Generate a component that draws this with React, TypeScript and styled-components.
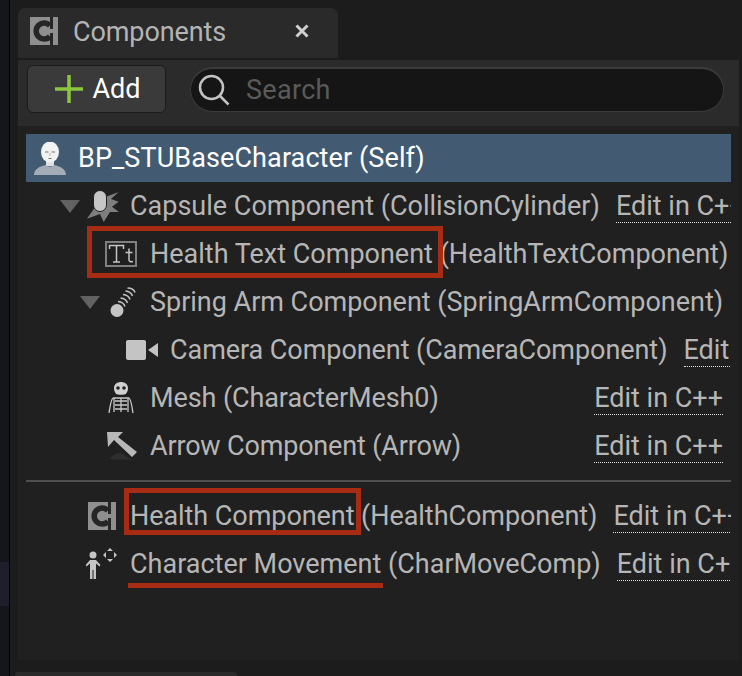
import React from 'react';
import styled, { createGlobalStyle } from 'styled-components';

const GlobalStyle = createGlobalStyle`
  html, body { margin: 0; padding: 0; background: #1c1c1c; }
  body { font-family: Roboto, "Liberation Sans", sans-serif; }
`;

const Page = styled.div`
  display: flex;
  width: 742px;
  height: 676px;
  overflow: hidden;
  background: #1c1c1c;
`;

const SideStrip = styled.div`
  display: flex;
  flex-direction: column;
  width: 10px;
  flex-shrink: 0;
  padding-top: 562px;
  box-sizing: border-box;
  background: #14161c;
  border-right: 1px solid #000;
`;

const StripPatch = styled.div`
  height: 44px;
  background: #1e1f2a;
`;

const Workspace = styled.div`
  display: flex;
  flex-direction: column;
  width: 721px;
  margin-left: 8px;
  padding-top: 8px;

  & > * {
    flex-shrink: 0;
  }
`;

const Tab = styled.div`
  display: flex;
  align-items: center;
  width: 320px;
  height: 50px;
  box-sizing: border-box;
  padding: 0 0 4px 12px;
  background: #2a2a2a;
  border-radius: 7px 7px 0 0;
  color: #b4b4b4;
  font-size: 27px;
`;

const TabTitle = styled.span`
  margin-left: 15px;
  padding-top: 2px;
  letter-spacing: -0.1px;
`;

const CloseGlyph = styled.svg`
  margin-left: auto;
  margin-right: 29px;
`;

const Toolbar = styled.div`
  display: flex;
  align-items: center;
  height: 66px;
  margin-top: 2px;
  box-sizing: border-box;
  padding: 0 15px 8px 9px;
  background: #2b2b2b;
`;

const AddButton = styled.div`
  display: flex;
  align-items: center;
  justify-content: center;
  gap: 9px;
  width: 139px;
  height: 48px;
  box-sizing: border-box;
  padding-left: 3px;
  background: #3a3a3a;
  border: 1px solid #1b1b1b;
  border-radius: 6px;
  color: #fff;
  font-size: 27px;
`;

const SearchBox = styled.div`
  display: flex;
  align-items: center;
  flex: 1;
  height: 45px;
  margin-left: 24px;
  box-sizing: border-box;
  padding-left: 7px;
  background: #151515;
  border: 1px solid #3b3b3b;
  border-top-width: 2px;
  border-radius: 23px;
`;

const SearchPlaceholder = styled.span`
  margin-left: 16px;
  color: #5a5a5a;
  font-size: 27px;
  letter-spacing: 0.3px;
`;

const Tree = styled.div`
  position: relative;
  height: 534px;
  box-sizing: border-box;
  padding: 8px 8px 0;
  background: #202020;
`;

const Row = styled.div<{ $indent: number; $selected?: boolean; $tracking?: number }>`
  display: flex;
  align-items: center;
  width: 705px;
  height: 48px;
  overflow: hidden;
  box-sizing: border-box;
  padding-left: ${(p) => p.$indent}px;
  background: ${(p) => (p.$selected ? '#435a73' : 'transparent')};
  color: ${(p) => (p.$selected ? '#fff' : '#b6b6b6')};
  font-size: 27px;
  letter-spacing: ${(p) => p.$tracking ?? 0}px;
  white-space: nowrap;
`;

const Caret = styled.svg`
  flex-shrink: 0;
  margin-right: 7px;
`;

const IconSlot = styled.span`
  display: flex;
  align-items: center;
  justify-content: center;
  flex-shrink: 0;
  width: 32px;
`;

const Label = styled.span<{ $gap: number }>`
  flex-shrink: 0;
  margin-left: ${(p) => p.$gap}px;
`;

const EditLink = styled.span<{ $pinned?: boolean }>`
  flex-shrink: 0;
  margin-left: ${(p) => (p.$pinned ? 'auto' : '16px')};
  margin-right: ${(p) => (p.$pinned ? '8px' : '0')};
  letter-spacing: 0;
  line-height: 32px;
  border-bottom: 1px dotted #e2e2e2;
`;

const Divider = styled.div`
  width: 705px;
  height: 2px;
  margin: 10px 0;
  background: #4f4f4f;
`;

const Mark = styled.div`
  position: absolute;
  box-sizing: border-box;
  border: 5px solid #a82c14;
`;

const HealthTextMark = styled(Mark)`
  left: 69px;
  top: 100px;
  width: 356px;
  height: 52px;
`;

const HealthMark = styled(Mark)`
  left: 106px;
  top: 362px;
  width: 237px;
  height: 47px;
`;

const MoveUnderline = styled.div`
  position: absolute;
  left: 110px;
  top: 457px;
  width: 255px;
  height: 5px;
  background: #a82c14;
`;

const BottomTab = styled.div`
  width: 222px;
  height: 8px;
  margin: 12px 0 0 -3px;
  background: #2a2a2a;
  border-radius: 3px 3px 0 0;
`;

const ClassIcon = () => (
  <svg width="28" height="28" viewBox="0 0 28 28">
    <rect width="28" height="28" fill="#8f8f8f" />
    <path d="M20 8.5A8 8 0 1 0 20 19.5" fill="none" stroke="#262626" strokeWidth="5.5" />
    <rect x="20" y="0" width="3" height="12" fill="#262626" />
    <rect x="20" y="16" width="3" height="12" fill="#262626" />
  </svg>
);

const PersonIcon = () => (
  <svg width="32" height="33" viewBox="0 0 32 33">
    <path d="M12 18h8v6h-8z" fill="#e0e0e0" />
    <path d="M0 33c0-6 6-9 12-10 2 2 6 2 8 0 6 1 12 4 12 10z" fill="#a4adb7" />
    <ellipse cx="16" cy="10" rx="9" ry="10.500" fill="#f2f2f2" />
    <path d="M11 10h3.500M17.500 10h3.500M14.500 16.500h3" stroke="#777" strokeWidth="1" />
    <path d="M16 11v3" stroke="#bbb" strokeWidth="1" />
  </svg>
);

const CapsuleIcon = () => (
  <svg width="32" height="34" viewBox="0 0 32 34">
    <path
      d="M31.700 3L24 10L31.700 12.700L25 17.700L32 23L23 23L16.700 33L13 25L0 29.700L6.700 20L13 10Z"
      fill="#7e7e7e"
    />
    <rect x="6.500" y="1.500" width="13" height="21" rx="6.500" fill="#c6c6c6" stroke="#202020" strokeWidth="1" />
  </svg>
);

const TextIcon = () => (
  <svg width="32" height="26" viewBox="0 0 32 26">
    <rect x="1" y="1" width="30" height="24" fill="none" stroke="#808080" strokeWidth="2" />
    <path
      d="M4.500 8V4.500h14V8M11.500 4.500V21M8 21h7M24 7.500V19c0 1.500 1.500 2 4 1.500M20.500 11.500h7"
      fill="none"
      stroke="#c4c4c4"
      strokeWidth="1.500"
    />
  </svg>
);

const SpringIcon = () => (
  <svg width="26" height="32" viewBox="0 0 26 32">
    <circle cx="7" cy="24.500" r="6.500" fill="#c4c4c4" />
    <path
      d="M8 15.500Q13.500 16 15 20.500M10.500 12Q16 12.500 17.500 17M13 8.500Q18.500 9 20 13.500M15.500 5Q21 5.500 22.500 10M17.500 2Q23.500 2 25 6.500"
      fill="none"
      stroke="#c4c4c4"
      strokeWidth="1.500"
    />
  </svg>
);

const CameraIcon = () => (
  <svg width="32" height="20" viewBox="0 0 32 20">
    <rect x="0" y="0" width="20" height="20" rx="2" fill="#c4c4c4" />
    <path d="M22 10l10-7v14z" fill="#c4c4c4" />
  </svg>
);

const SkeletonIcon = () => (
  <svg width="26" height="32" viewBox="0 0 26 32">
    <path d="M6 6c0-8 14-8 14 0 0 4-2 5-2 6-2 1-8 1-10 0 0-1-2-2-2-6z" fill="#d0d0d0" />
    <circle cx="10" cy="6" r="1.800" fill="#202020" />
    <circle cx="16" cy="6" r="1.800" fill="#202020" />
    <path
      d="M7 19h12M7 23h12M7 27h12M5 16c-2 1-3 9-4 15M21 16c2 1 3 9 4 15M5 16h16M13 16v14M6 16v14M20 16v14"
      fill="none"
      stroke="#c8c8c8"
      strokeWidth="1.300"
    />
  </svg>
);

const ArrowIcon = () => (
  <svg width="32" height="30" viewBox="0 0 32 30">
    <path d="M5 28c4-7 11-8 16-3l6 4z" fill="#2e2e2e" />
    <path d="M2 1h16l-5 5 19 15-5 5L9 9l-6 7z" fill="#b8b8b8" />
  </svg>
);

const MoveIcon = () => (
  <svg width="32" height="32" viewBox="0 0 32 32">
    <circle cx="7" cy="7" r="3.500" fill="#c4c4c4" />
    <path
      d="M4 12h6l4.500 5-1 1.500L10 15.500V31H7.500v-9h-1v9H4V15.500l-3.500 3-1-1.500z"
      fill="#c4c4c4"
    />
    <path d="M24 0l3 3h-6zM24 14l3-3h-6zM17 7l3-3v6zM31 7l-3-3v6z" fill="#c4c4c4" />
  </svg>
);

const Expander = () => (
  <Caret width="20" height="13" viewBox="0 0 20 13">
    <path d="M0 0h20L10 13z" fill="#626262" />
  </Caret>
);

export default function App() {
  return (
    <Page>
      <GlobalStyle />
      <SideStrip>
        <StripPatch />
      </SideStrip>
      <Workspace>
        <Tab>
          <ClassIcon />
          <TabTitle>Components</TabTitle>
          <CloseGlyph width="14" height="14" viewBox="0 0 14 14">
            <path d="M1.500 1.500l11 11M12.500 1.500l-11 11" stroke="#cfcfcf" strokeWidth="3" />
          </CloseGlyph>
        </Tab>
        <Toolbar>
          <AddButton>
            <svg width="28" height="28" viewBox="0 0 28 28">
              <path d="M14 0v28M0 14h28" stroke="#8cc63f" strokeWidth="3.500" />
            </svg>
            Add
          </AddButton>
          <SearchBox>
            <svg width="32" height="32" viewBox="0 0 32 32">
              <circle cx="13.500" cy="13.500" r="11.500" fill="none" stroke="#c2c2c2" strokeWidth="2.500" />
              <path d="M22 22l8.500 8.500" stroke="#c2c2c2" strokeWidth="2.500" />
            </svg>
            <SearchPlaceholder>Search</SearchPlaceholder>
          </SearchBox>
        </Toolbar>
        <Tree>
          <Row $indent={8} $selected $tracking={0.1}>
            <IconSlot><PersonIcon /></IconSlot>
            <Label $gap={12}>BP_STUBaseCharacter (Self)</Label>
          </Row>
          <Row $indent={34}>
            <Expander />
            <IconSlot><CapsuleIcon /></IconSlot>
            <Label $gap={11}>Capsule Component (CollisionCylinder)</Label>
            <EditLink>Edit in C++</EditLink>
          </Row>
          <Row $indent={79}>
            <IconSlot><TextIcon /></IconSlot>
            <Label $gap={13}>Health Text Component (HealthTextComponent)</Label>
          </Row>
          <Row $indent={54} $tracking={-0.02}>
            <Expander />
            <IconSlot><SpringIcon /></IconSlot>
            <Label $gap={11}>Spring Arm Component (SpringArmComponent)</Label>
          </Row>
          <Row $indent={100} $tracking={-0.06}>
            <IconSlot><CameraIcon /></IconSlot>
            <Label $gap={12}>Camera Component (CameraComponent)</Label>
            <EditLink>Edit in C++</EditLink>
          </Row>
          <Row $indent={79} $tracking={-0.1}>
            <IconSlot><SkeletonIcon /></IconSlot>
            <Label $gap={13}>Mesh (CharacterMesh0)</Label>
            <EditLink $pinned>Edit in C++</EditLink>
          </Row>
          <Row $indent={79} $tracking={-0.17}>
            <IconSlot><ArrowIcon /></IconSlot>
            <Label $gap={13}>Arrow Component (Arrow)</Label>
            <EditLink $pinned>Edit in C++</EditLink>
          </Row>
          <Divider />
          <Row $indent={60} $tracking={-0.06}>
            <IconSlot><ClassIcon /></IconSlot>
            <Label $gap={12}>Health Component (HealthComponent)</Label>
            <EditLink>Edit in C++</EditLink>
          </Row>
          <Row $indent={60}>
            <IconSlot><MoveIcon /></IconSlot>
            <Label $gap={12}>Character Movement (CharMoveComp)</Label>
            <EditLink>Edit in C++</EditLink>
          </Row>
          <HealthTextMark />
          <HealthMark />
          <MoveUnderline />
        </Tree>
        <BottomTab />
      </Workspace>
    </Page>
  );
}
